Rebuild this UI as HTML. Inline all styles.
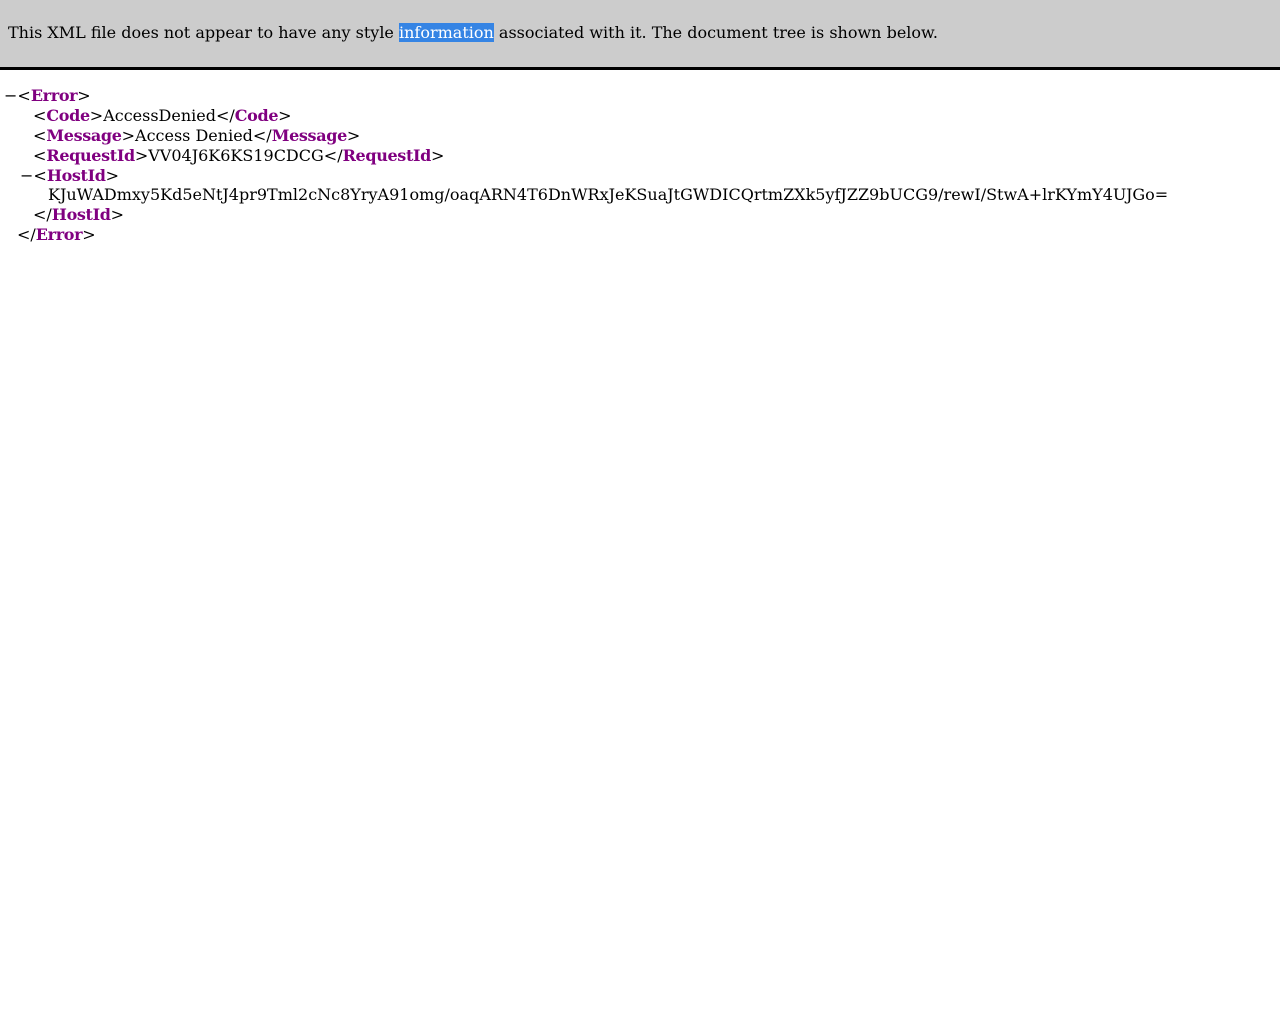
<!DOCTYPE html>
<html><head><meta charset="utf-8"><style>
body{margin:0;background:#fff;font-family:"DejaVu Serif",serif;font-size:16px;color:#000}
#hdr{position:absolute;left:0;top:0;width:1280px;height:67px;background:#ccc;border-bottom:3px solid #000}
#hdr div{position:absolute;left:8px;top:23px;line-height:20px;white-space:nowrap}
.sel{background:#3584e4;color:#fff}
.l{position:absolute;line-height:20px;white-space:nowrap}
b{color:#800080;letter-spacing:-0.35px}
</style></head><body>
<div id="hdr"><div>This XML file does not appear to have any style <span class="sel">information</span> associated with it. The document tree is shown below.</div></div>
<div class="l" style="left:4px;top:86px">−&lt;<b>Error</b>&gt;</div>
<div class="l" style="left:33px;top:106px">&lt;<b>Code</b>&gt;AccessDenied&lt;/<b>Code</b>&gt;</div>
<div class="l" style="left:33px;top:126px">&lt;<b>Message</b>&gt;Access Denied&lt;/<b>Message</b>&gt;</div>
<div class="l" style="left:33px;top:146px">&lt;<b>RequestId</b>&gt;VV04J6K6KS19CDCG&lt;/<b>RequestId</b>&gt;</div>
<div class="l" style="left:20px;top:166px">−&lt;<b>HostId</b>&gt;</div>
<div class="l" style="left:48px;top:185px">KJuWADmxy5Kd5eNtJ4pr9Tml2cNc8YryA91omg/oaqARN4T6DnWRxJeKSuaJtGWDICQrtmZXk5yfJZZ9bUCG9/rewI/StwA+lrKYmY4UJGo=</div>
<div class="l" style="left:33px;top:205px">&lt;/<b>HostId</b>&gt;</div>
<div class="l" style="left:17px;top:225px">&lt;/<b>Error</b>&gt;</div>
</body></html>
